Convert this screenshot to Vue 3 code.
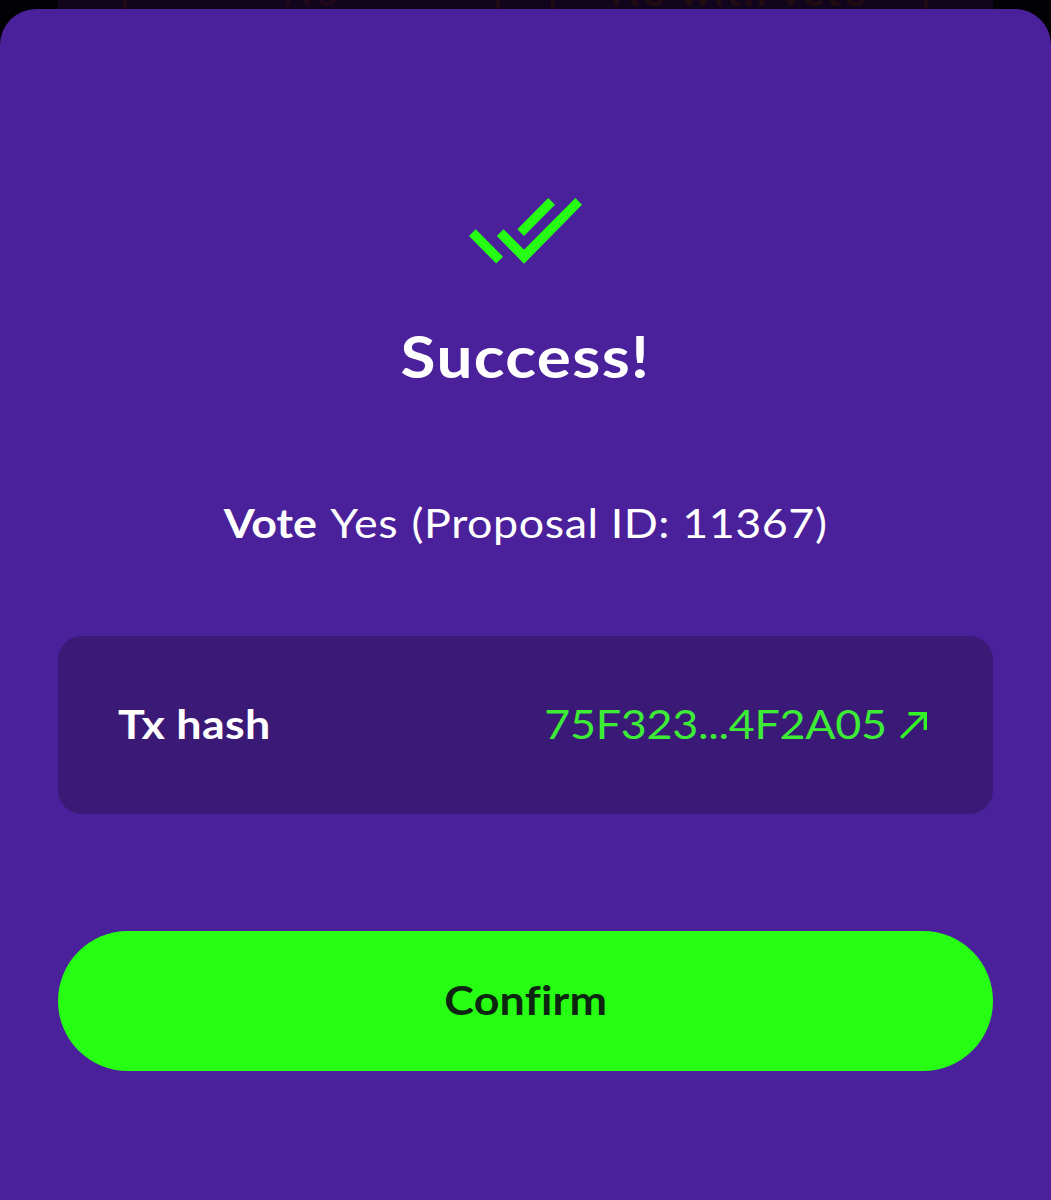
<template>
  <div class="page">
    <div class="backdrop">
      <div class="options">
        <div class="option"><span class="option-label no">No</span></div>
        <div class="option"><span class="option-label">No with veto</span></div>
      </div>
    </div>

    <main class="sheet">
      <svg class="check" viewBox="0 0 113 66">
        <path d="M0 38 6.7 31.2 34 58.7 27.2 65.5Z" />
        <path d="M27.8 38 34.6 31.2 55 51.8 106.4 0 113 6.8 55 65.7Z" />
        <path d="M48.3 31.2 79.2 0 86 6.8 55 38Z" />
      </svg>

      <h1 class="title">Success!</h1>

      <p class="message">
        <strong class="action">Vote</strong>
        <span>Yes</span>
        <span class="proposal">(Proposal ID: {{ proposalId }})</span>
      </p>

      <dl class="details">
        <dt class="term">Tx hash</dt>
        <dd class="hash">
          <span class="hash-text">{{ shortHash }}</span>
          <svg class="arrow" viewBox="0 0 27 27">
            <path d="M1.2 25.8 25 2M8.5 1.7H25.3V18" />
          </svg>
        </dd>
      </dl>

      <button class="confirm" type="button">
        <span class="confirm-text">Confirm</span>
      </button>
    </main>
  </div>
</template>

<script setup>
const proposalId = 11367;
const shortHash = '75F323...4F2A05';
</script>

<style>
body {
  background: #000;
}
</style>

<style scoped>
.page {
  position: relative;
  height: 1200px;
  padding-top: 9px;
  box-sizing: border-box;
  overflow: hidden;
  background: #020104;
  font-family: Lato, 'Open Sans', sans-serif;
}

.backdrop {
  position: absolute;
  top: 0;
  left: 58px;
  width: 935px;
  height: 44px;
  box-sizing: border-box;
  padding: 0 65px;
  background: #10051d;
}

.options {
  display: grid;
  grid-template-columns: 1fr 1fr;
  gap: 51px;
  height: 20px;
}

.option {
  display: flex;
  justify-content: center;
  border: solid #1f0914;
  border-width: 0 4px;
}

.option-label {
  margin-top: -33px;
  font-size: 40px;
  line-height: 48px;
  font-weight: 700;
  letter-spacing: 2.4px;
  white-space: nowrap;
  color: #210b12;
}

.option-label.no {
  color: #200719;
}

.sheet {
  position: relative;
  display: flex;
  flex-direction: column;
  align-items: center;
  height: 1191px;
  box-sizing: border-box;
  padding: 189px 58px 0;
  border-radius: 36px 36px 0 0;
  background: #4a209b;
  color: #fff;
}

.check {
  width: 113px;
  height: 66px;
  fill: #26ff14;
}

/* the typeface is set slightly extended throughout the sheet */
.title,
.message,
.term,
.hash-text,
.confirm-text {
  transform: scaleX(1.12);
}

.title {
  margin: 56px 0 0;
  font-size: 57px;
  line-height: 72px;
  font-weight: 700;
  letter-spacing: 1.2px;
}

.message {
  display: flex;
  gap: 12px;
  margin: 107px 0 0;
  font-size: 40px;
  line-height: 48px;
  letter-spacing: 0.5px;
}

.action {
  font-weight: 700;
  letter-spacing: 0;
}

.details {
  display: flex;
  align-items: center;
  justify-content: space-between;
  width: 935px;
  height: 178px;
  box-sizing: border-box;
  margin: 88.6px 0 0;
  padding: 0 66px 1px 60px;
  border-radius: 24px;
  background: #3b1a77;
  font-size: 40px;
}

.term {
  font-weight: 700;
  letter-spacing: 0.3px;
  transform-origin: left;
}

.hash {
  display: flex;
  align-items: center;
  gap: 13px;
  margin: 0;
  letter-spacing: -0.25px;
  color: #3ded35;
}

.hash-text {
  transform-origin: right;
}

.arrow {
  width: 27px;
  height: 27px;
  margin-top: 3px;
  fill: none;
  stroke: #32f526;
  stroke-width: 3.4;
}

.confirm {
  width: 935px;
  height: 140px;
  margin-top: 117px;
  padding: 0 0 1px;
  border: 0;
  border-radius: 70px;
  background: #26ff14;
  color: #0d260f;
  font: inherit;
  font-size: 40px;
  font-weight: 700;
  letter-spacing: 0.2px;
}

.confirm-text {
  display: inline-block;
}
</style>
